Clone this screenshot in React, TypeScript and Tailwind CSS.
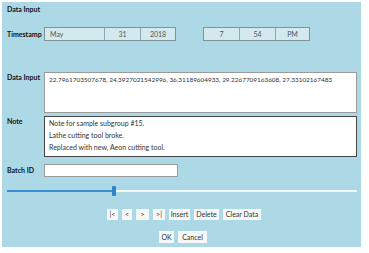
const font = { fontFamily: 'Lato, "Noto Sans", sans-serif' };

const Cell = ({ text, w, align = "center", last = false }: { text: string; w: string; align?: string; last?: boolean }) => (
  <div
    className={`${w} h-full flex items-center ${align === "left" ? "justify-start pl-[5px]" : "justify-center"} ${
      last ? "" : "border-r border-[#8fa7ae]"
    }`}
  >
    {text}
  </div>
);

const Btn = ({ label, w }: { label: string; w: string }) => (
  <div className={`${w} h-full bg-[#f7f7f7] flex items-center justify-center text-[#333]`}>{label}</div>
);

const App = () => {
  return (
    <div className="w-[369px] h-[253px] bg-white p-[2px] text-[7px] text-[#333] leading-none whitespace-nowrap" style={font}>
      <div className="w-[359px] h-[245px] bg-[#add8e6] pl-[5px] flex flex-col">
        <div className="h-[14px] flex items-center font-bold text-[#111]">Data Input</div>

        <div className="mt-[11px] h-[14px] flex">
          <div className="w-[37px] flex items-center font-bold text-[#111]">Timestamp</div>
          <div className="w-[132px] h-full flex border border-[#7f9298] bg-[#d3e9ef] text-[#555]">
            <Cell text="May" w="w-[60px]" align="left" />
            <Cell text="31" w="w-[36px]" />
            <Cell text="2018" w="w-[34px]" last />
          </div>
          <div className="ml-[27px] w-[107px] h-full flex border border-[#7f9298] bg-[#d3e9ef] text-[#555]">
            <Cell text="7" w="w-[36px]" />
            <Cell text="54" w="w-[36px]" />
            <Cell text="PM" w="w-[33px]" last />
          </div>
        </div>

        <div className="mt-[31px] h-[41px] flex">
          <div className="w-[37px] pt-[2px] font-bold text-[#111]">Data Input</div>
          <div className="w-[313px] h-full bg-white border border-[#9a9a9a] pl-[4px] pt-[4px] overflow-hidden text-[6.4px]">
            22.7961703507678, 24.3927021542996, 36.31189604933, 29.2267709163608, 27.33102167483
          </div>
        </div>

        <div className="mt-[3px] h-[41px] flex">
          <div className="w-[37px] pt-[2px] font-bold text-[#111]">Note</div>
          <div className="w-[313px] h-full bg-white border border-[#444] pl-[4px] pt-[3px] flex flex-col gap-[5px]">
            <div>Note for sample subgroup #15.</div>
            <div>Lathe cutting tool broke.</div>
            <div>Replaced with new, Aeon cutting tool.</div>
          </div>
        </div>

        <div className="mt-[7px] h-[13px] flex">
          <div className="w-[37px] flex items-center font-bold text-[#111]">Batch ID</div>
          <div className="w-[134px] h-full bg-white border border-[#9a9a9a]" />
        </div>

        <div className="mt-[9px] h-[10px] w-[350px] flex items-center">
          <div className="w-[105px] h-[2px] bg-[#3a8fd0]" />
          <div className="w-[4px] h-[10px] rounded-[1px] bg-[#2f86c8]" />
          <div className="flex-1 h-[2px] bg-[#f2f8fa]" />
        </div>

        <div className="mt-[13px] h-[11px] flex pl-[100px] gap-[4px]">
          <Btn label="|<" w="w-[11px]" />
          <Btn label="<" w="w-[10px]" />
          <Btn label=">" w="w-[13px]" />
          <Btn label=">|" w="w-[12px]" />
          <Btn label="Insert" w="w-[21px]" />
          <Btn label="Delete" w="w-[25px]" />
          <Btn label="Clear Data" w="w-[38px]" />
        </div>

        <div className="mt-[11px] h-[12px] flex pl-[152px] gap-[4px]">
          <Btn label="OK" w="w-[15px]" />
          <Btn label="Cancel" w="w-[29px]" />
        </div>
      </div>
    </div>
  );
};

export default App;
